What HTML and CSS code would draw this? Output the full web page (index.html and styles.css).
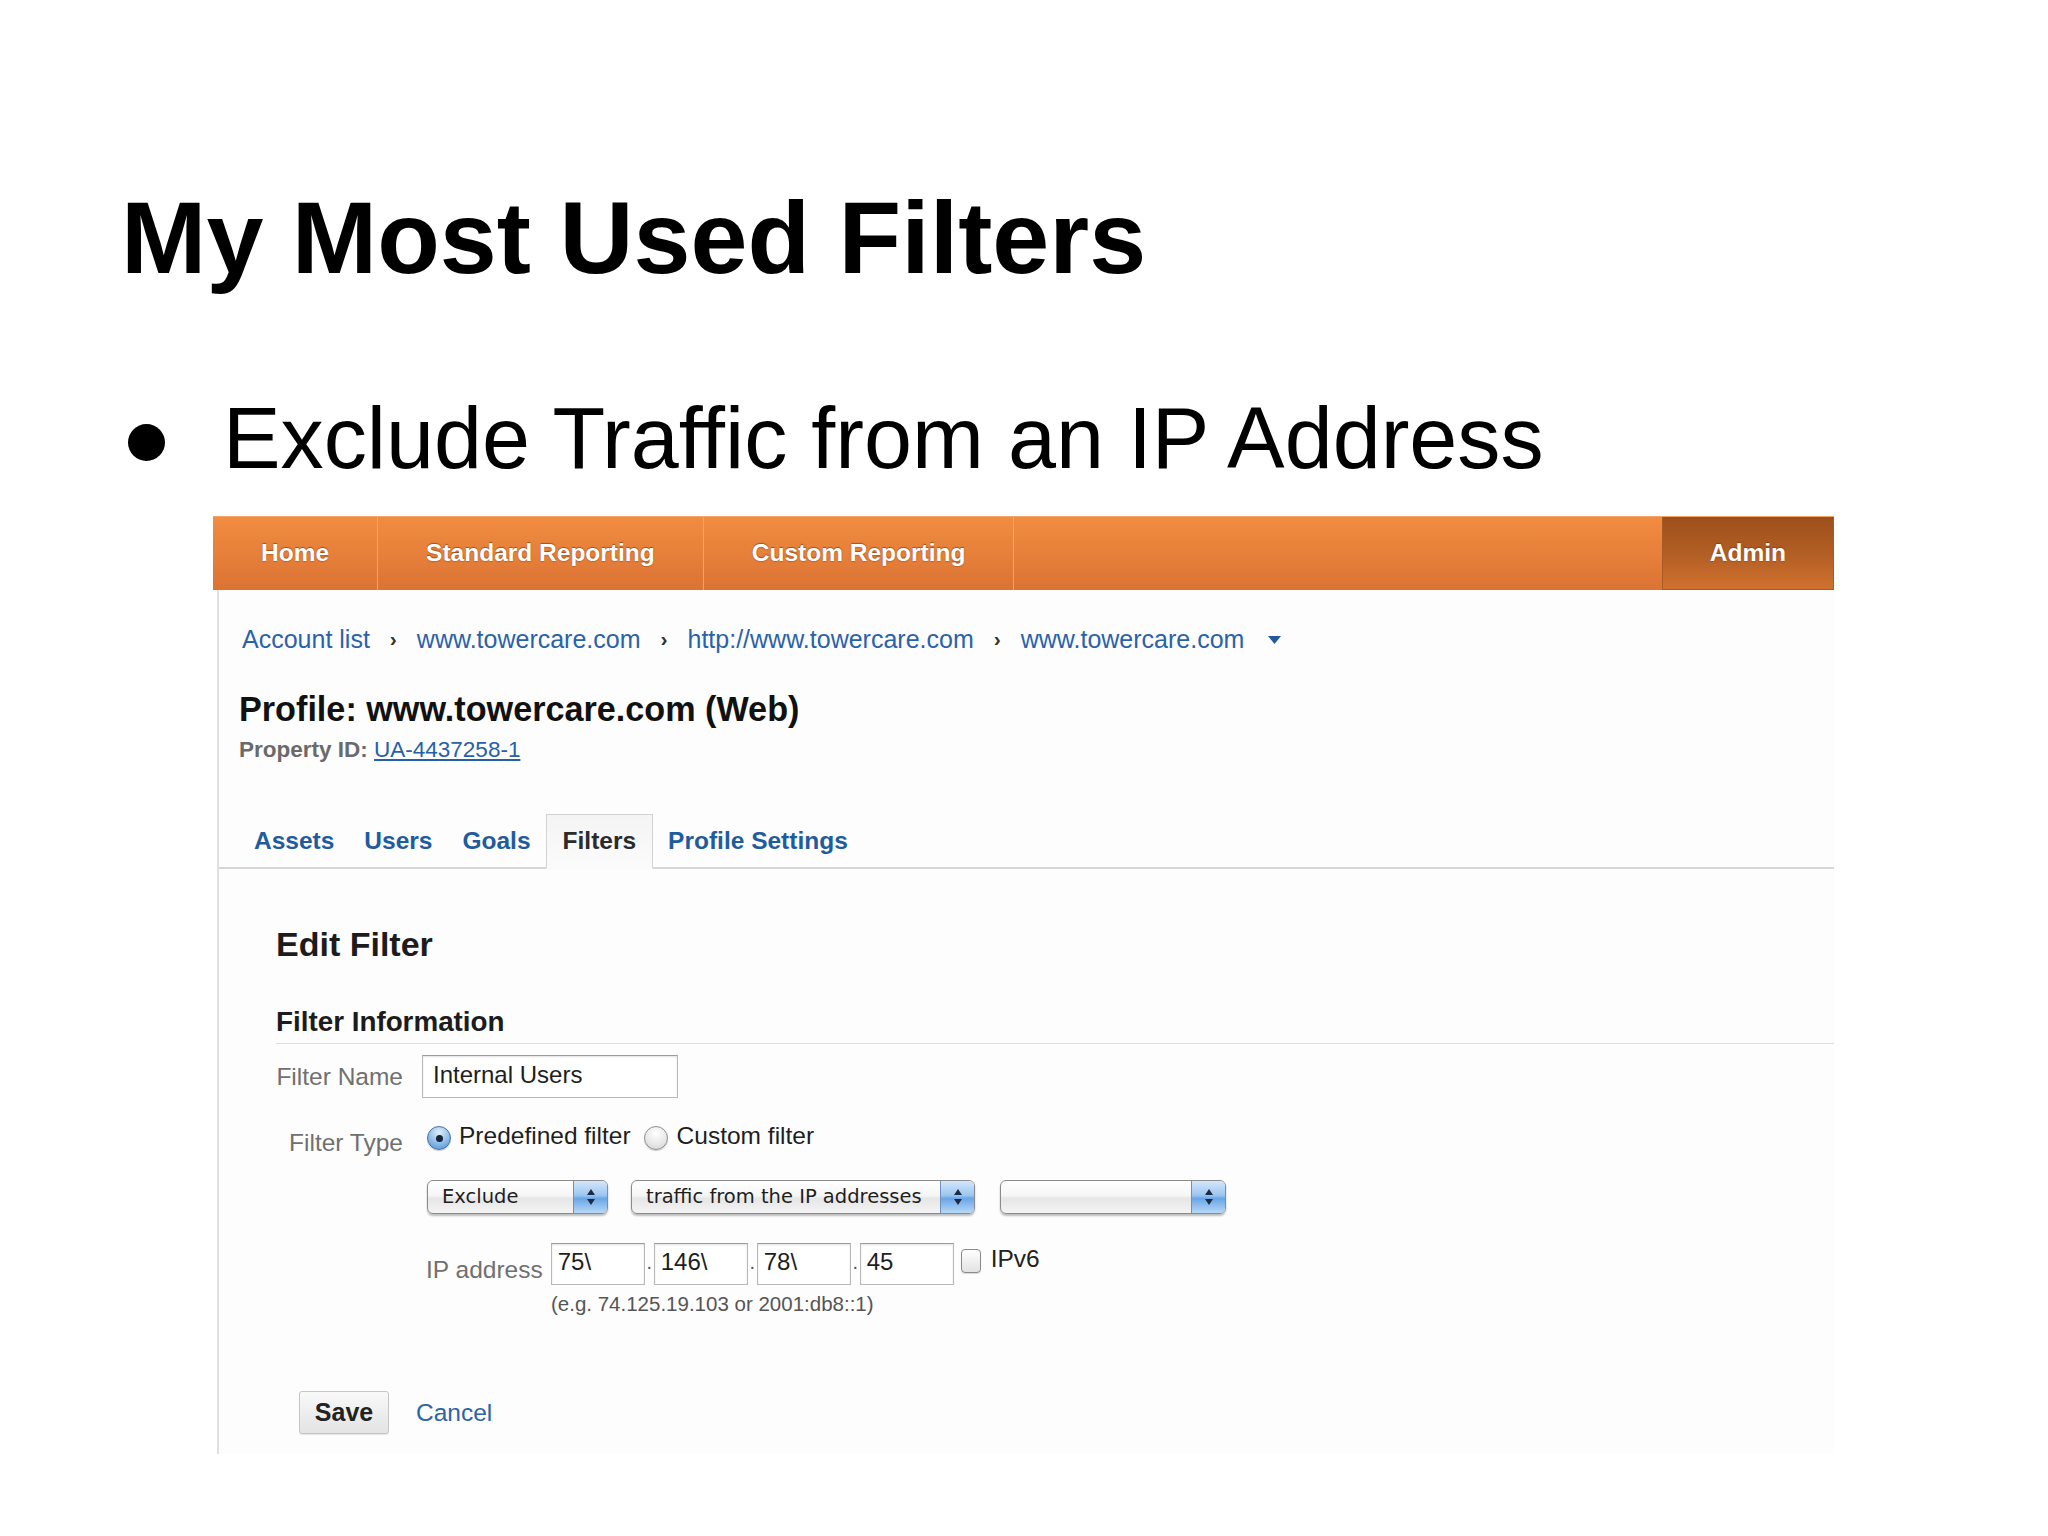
FILE: index.html
```html
<!DOCTYPE html>
<html>
<head>
<meta charset="utf-8">
<title>My Most Used Filters</title>
<link rel="stylesheet" href="styles.css">
</head>
<body>
<div class="slide">
  <h1 class="title">My Most Used Filters</h1>
  <ul class="bullets">
    <li><span class="dot"></span><span>Exclude Traffic from an IP Address</span></li>
  </ul>

  <div class="ga">
    <nav class="ga-nav">
      <span class="nav-item">Home</span>
      <span class="nav-item">Standard Reporting</span>
      <span class="nav-item">Custom Reporting</span>
      <span class="nav-spacer"></span>
      <span class="nav-item admin">Admin</span>
    </nav>

    <div class="ga-body">
      <div class="crumbs">
        <a class="crumb">Account list</a><span class="sep">›</span>
        <a class="crumb">www.towercare.com</a><span class="sep">›</span>
        <a class="crumb">http://www.towercare.com</a><span class="sep">›</span>
        <a class="crumb">www.towercare.com</a>
        <svg class="caret" width="13" height="8" viewBox="0 0 13 8"><path d="M0 0 H13 L6.5 8 Z" fill="#25599c"/></svg>
      </div>

      <h2 class="profile">Profile: www.towercare.com (Web)</h2>
      <div class="prop"><b>Property ID:</b> <a class="prop-link">UA-4437258-1</a></div>

      <div class="tabs">
        <span class="tab">Assets</span>
        <span class="tab">Users</span>
        <span class="tab">Goals</span>
        <span class="tab active">Filters</span>
        <span class="tab">Profile Settings</span>
      </div>

      <div class="edit">
        <h3 class="edit-title">Edit Filter</h3>
        <h4 class="section-title">Filter Information</h4>

        <div class="row row-name">
          <span class="label">Filter Name</span>
          <div class="text-input name-input">Internal Users</div>
        </div>

        <div class="row row-type">
          <span class="label">Filter Type</span>
          <div class="options">
            <span class="radio checked"><span class="radio-dot"></span></span>
            <span class="opt-text">Predefined filter</span>
            <span class="radio second"></span>
            <span class="opt-text second-text">Custom filter</span>
          </div>
        </div>

        <div class="row row-selects">
          <div class="select sel-1">
            <span class="sel-text">Exclude</span>
            <span class="sel-btn"><svg width="12" height="20" viewBox="0 0 12 20"><path d="M6 2 L10 8 H2 Z M6 18 L10 12 H2 Z" fill="#1c2b45"/></svg></span>
          </div>
          <div class="select sel-2">
            <span class="sel-text">traffic from the IP addresses</span>
            <span class="sel-btn"><svg width="12" height="20" viewBox="0 0 12 20"><path d="M6 2 L10 8 H2 Z M6 18 L10 12 H2 Z" fill="#1c2b45"/></svg></span>
          </div>
          <div class="select sel-3">
            <span class="sel-text"></span>
            <span class="sel-btn"><svg width="12" height="20" viewBox="0 0 12 20"><path d="M6 2 L10 8 H2 Z M6 18 L10 12 H2 Z" fill="#1c2b45"/></svg></span>
          </div>
        </div>

        <div class="row row-ip">
          <span class="ip-label">IP address</span>
          <div class="text-input ip-box">75\</div>
          <span class="ip-dot">.</span>
          <div class="text-input ip-box">146\</div>
          <span class="ip-dot">.</span>
          <div class="text-input ip-box">78\</div>
          <span class="ip-dot">.</span>
          <div class="text-input ip-box">45</div>
          <span class="checkbox"></span>
          <span class="ipv6">IPv6</span>
        </div>
        <div class="hint">(e.g. 74.125.19.103 or 2001:db8::1)</div>

        <div class="row row-buttons">
          <span class="btn-save">Save</span>
          <a class="cancel">Cancel</a>
        </div>
      </div>
    </div>
  </div>
</div>
</body>
</html>
```

FILE: styles.css
```css
html, body {
  margin: 0;
  padding: 0;
  background: #ffffff;
}

body {
  font-family: "Liberation Sans", Arial, Helvetica, sans-serif;
  color: #000;
}

.slide {
  padding: 186px 0 0 121px;
  width: 2048px;
  height: 1536px;
  box-sizing: border-box;
  overflow: hidden;
}

.title {
  margin: 0;
  font-size: 102.5px;
  line-height: 104px;
  font-weight: bold;
  color: #000;
}

.bullets {
  list-style: none;
  margin: 106px 0 0 0;
  padding: 0;
}

.bullets li {
  display: flex;
  align-items: flex-start;
  font-size: 86.3px;
  line-height: 85px;
  color: #000;
}

.dot {
  display: inline-block;
  width: 37px;
  height: 37px;
  border-radius: 50%;
  background: #000;
  margin: 28px 58px 0 7px;
  flex: none;
}

/* ---------- embedded Google Analytics screenshot ---------- */
.ga {
  margin: 35px 0 0 92px;
  width: 1621px;
}

.ga-nav {
  display: flex;
  height: 74px;
  box-sizing: border-box;
  border-top: 1px solid #f4a466;
  background: linear-gradient(#f18c41, #e6803a 50%, #db7333);
}

.nav-item {
  padding: 0 48px;
  line-height: 71px;
  font-size: 24.5px;
  font-weight: bold;
  color: #fff;
  text-shadow: 0 -1px 1px rgba(110, 50, 10, 0.6), 0 1px 1px rgba(110, 50, 10, 0.3);
  border-right: 1px solid #f2a56e;
  white-space: nowrap;
}

.nav-spacer {
  flex: 1;
}

.nav-item.admin {
  border: 1px solid #a65a24;
  border-top: none;
  background: linear-gradient(#9d4f1b, #b25e24 50%, #d0712f);
  padding: 0 47px;
  line-height: 71px;
}

.ga-body {
  margin-left: 4px;
  border-left: 2px solid #e0e0e0;
  background: #fdfdfd;
  padding: 34px 0 20px 0;
}

.crumbs {
  display: flex;
  align-items: center;
  padding-left: 23px;
  height: 30px;
  font-size: 25px;
  line-height: 30px;
}

.crumb {
  color: #2a62aa;
  white-space: nowrap;
}

.sep {
  margin: 0 20px;
  color: #333;
  font-size: 21px;
  font-weight: bold;
}

.caret {
  margin-left: 24px;
  margin-top: 2px;
}

.profile {
  margin: 35px 0 0 20px;
  font-size: 34.2px;
  line-height: 40px;
  font-weight: bold;
  color: #111;
}

.prop {
  margin: 8px 0 0 20px;
  font-size: 22.5px;
  line-height: 26px;
  color: #6a6a6a;
}

.prop b {
  font-weight: bold;
}

.prop-link {
  color: #2461a8;
  text-decoration: underline;
}

.tabs {
  display: flex;
  margin-top: 51px;
  padding-left: 20px;
  border-bottom: 2px solid #d6d6d6;
}

.tab {
  padding: 0 14px;
  line-height: 52px;
  font-size: 24.5px;
  font-weight: bold;
  color: #1f5c9e;
  border: 1px solid transparent;
  border-bottom: 2px solid transparent;
  margin-bottom: -2px;
  white-space: nowrap;
}

.tab.active {
  padding: 0 16px;
  color: #2b2b2b;
  border-color: #d2d2d2;
  border-bottom-color: #fbfbfb;
  background: linear-gradient(#f4f4f4, #fbfbfb);
}

.edit {
  padding-left: 57px;
}

.edit-title {
  margin: 55px 0 0 0;
  font-size: 34px;
  line-height: 40px;
  font-weight: bold;
  color: #1c1c1c;
}

.section-title {
  margin: 42px 0 0 0;
  padding-bottom: 5px;
  font-size: 27.8px;
  line-height: 32px;
  font-weight: bold;
  color: #1c1c1c;
  border-bottom: 1px solid #dedede;
}

.row {
  display: flex;
  align-items: flex-start;
}

.label {
  width: 127px;
  margin-right: 19px;
  text-align: right;
  font-size: 24.5px;
  line-height: 43px;
  color: #707070;
  white-space: nowrap;
}

.text-input {
  box-sizing: border-box;
  background: #fff;
  border: 1px solid #b8b8b8;
  border-top-color: #9c9c9c;
  box-shadow: inset 0 1px 2px rgba(0, 0, 0, 0.12);
  font-size: 24px;
  color: #1e1e1e;
  white-space: nowrap;
}

.row-name {
  margin-top: 11px;
}

.name-input {
  width: 256px;
  height: 43px;
  padding-left: 10px;
  line-height: 38px;
}

.row-type {
  margin-top: 23px;
}

.options {
  display: flex;
  align-items: flex-start;
}

.radio {
  box-sizing: border-box;
  width: 24px;
  height: 24px;
  border-radius: 50%;
  margin: 5px 0 0 5px;
  border: 1px solid #8e8e8e;
  background: radial-gradient(circle at 50% 30%, #ffffff, #e6e6e6 60%, #cfcfcf);
  box-shadow: 0 1px 1px rgba(0, 0, 0, 0.2);
  display: flex;
  align-items: center;
  justify-content: center;
}

.radio.checked {
  border-color: #44709f;
  background: radial-gradient(circle at 50% 25%, #e1eefb, #8cbbe9 55%, #4d8fd3);
}

.radio-dot {
  width: 7px;
  height: 7px;
  border-radius: 50%;
  background: #16243a;
}

.radio.second {
  margin-left: 13px;
}

.opt-text {
  margin-left: 8px;
  font-size: 24.5px;
  line-height: 30px;
  color: #1e1e1e;
  white-space: nowrap;
}

.opt-text.second-text {
  margin-left: 9px;
}

.row-selects {
  margin: 16px 0 0 151px;
}

.select {
  box-sizing: border-box;
  display: flex;
  height: 34px;
  border: 1px solid #8b8b8b;
  border-radius: 6px;
  background: linear-gradient(#ffffff, #f6f6f6 45%, #e6e6e6 55%, #f4f4f4);
  box-shadow: 0 2px 2px rgba(0, 0, 0, 0.25);
  overflow: hidden;
}

.sel-1 { width: 181px; }
.sel-2 { width: 344px; margin-left: 23px; }
.sel-3 { width: 226px; margin-left: 25px; }

.sel-text {
  flex: 1;
  padding-left: 14px;
  font-family: "DejaVu Sans", "Liberation Sans", sans-serif;
  font-size: 19.5px;
  line-height: 32px;
  color: #1e1e1e;
  white-space: nowrap;
  overflow: hidden;
}

.sel-btn {
  width: 33px;
  border-left: 1px solid #6d8fbe;
  background: linear-gradient(#d4e7fa, #9cc6f0 45%, #6aa6e6 55%, #b7d8f7);
  display: flex;
  align-items: center;
  justify-content: center;
}

.row-ip {
  margin: 29px 0 0 150px;
}

.ip-label {
  height: 42px;
  line-height: 53px;
  margin-right: 8px;
  font-size: 24.5px;
  color: #707070;
  white-space: nowrap;
}

.ip-box {
  width: 94px;
  height: 42px;
  padding-left: 6px;
  line-height: 36px;
}

.ip-dot {
  width: 9px;
  text-align: center;
  font-size: 20px;
  line-height: 36px;
  padding-top: 1px;
  color: #555;
}

.checkbox {
  box-sizing: border-box;
  width: 20px;
  height: 24px;
  margin: 6px 0 0 7px;
  border: 1px solid #8a8a8a;
  border-radius: 4px;
  background: linear-gradient(#ffffff, #e2e2e2);
  box-shadow: 0 1px 1px rgba(0, 0, 0, 0.15);
}

.ipv6 {
  margin: 1px 0 0 10px;
  font-size: 24.5px;
  line-height: 30px;
  color: #222;
}

.hint {
  margin: 7px 0 0 275px;
  font-size: 20.5px;
  line-height: 24px;
  color: #555;
  white-space: nowrap;
}

.row-buttons {
  margin: 75px 0 0 23px;
  align-items: center;
}

.btn-save {
  box-sizing: border-box;
  width: 90px;
  height: 43px;
  border: 1px solid #c6c6c6;
  border-radius: 3px;
  background: linear-gradient(#f9f9f9, #e3e3e3);
  box-shadow: 0 1px 1px rgba(0, 0, 0, 0.1);
  text-align: center;
  font-size: 25px;
  line-height: 41px;
  font-weight: bold;
  color: #222;
}

.cancel {
  margin-left: 27px;
  font-size: 24.5px;
  line-height: 43px;
  color: #2a64a8;
}
```
